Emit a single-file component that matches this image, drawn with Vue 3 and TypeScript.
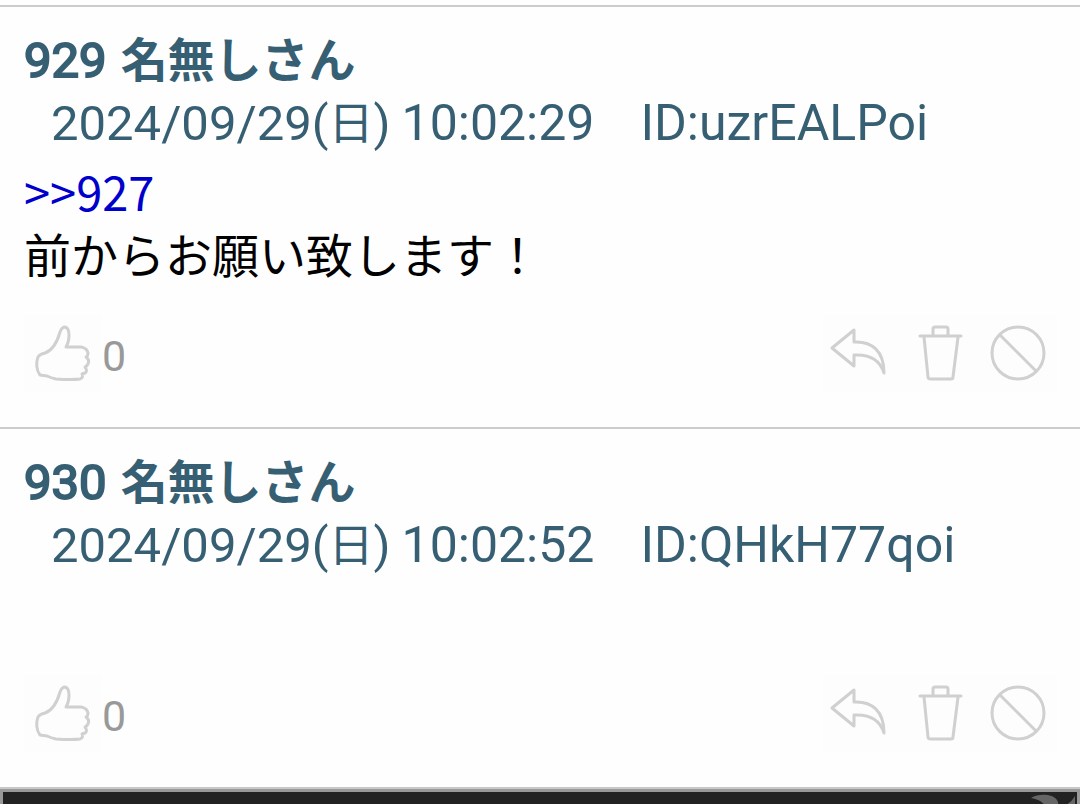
<script setup lang="ts">
interface Post {
  no: number
  name: string
  date: string
  weekday: string
  time: string
  id: string
  replyTo?: number
  text: string
  likes: number
}

const posts: Post[] = [
  { no: 929, name: '名無しさん', date: '2024/09/29', weekday: '日', time: '10:02:29', id: 'uzrEALPoi', replyTo: 927, text: '前からお願い致します！', likes: 0 },
  { no: 930, name: '名無しさん', date: '2024/09/29', weekday: '日', time: '10:02:52', id: 'QHkH77qoi', text: '', likes: 0 },
]
</script>

<template>
  <main class="thread">
    <article v-for="post in posts" :id="`post-${post.no}`" :key="post.no" class="post">
      <header class="head">
        <h2 class="title"><span class="no">{{ post.no }}</span><span>{{ post.name }}</span></h2>
        <div class="meta">
          <span class="date">{{ post.date }}(<span class="weekday">{{ post.weekday }}</span>)</span>
          <span class="time">{{ post.time }}</span>
          <span>ID:{{ post.id }}</span>
        </div>
      </header>
      <div class="body">
        <a v-if="post.replyTo" class="anchor" :href="`#post-${post.replyTo}`">&gt;&gt;{{ post.replyTo }}</a>
        <p class="text">{{ post.text }}</p>
      </div>
      <footer class="actions">
        <button class="icon" type="button" aria-label="いいね">
          <svg viewBox="0 0 78 78">
            <path d="M14 43 Q16 40 21 39 C29 36 33 29 36 18 Q38 13 41 13 Q45 14 45 21 Q45 28 42 33 H57 Q63 34 64 39 Q64 42 62 43 Q66 46 64 50 Q63 52 61 53 Q64 57 61 59 L58 60 Q60 63 56 65 Q48 66 32 65 Q27 64 23 62 L16 61 C12 56 12 48 14 43Z" />
          </svg>
        </button>
        <span class="count">{{ post.likes }}</span>
        <button class="icon first" type="button" aria-label="返信">
          <svg viewBox="0 0 78 78">
            <path d="M9 34 L31 16 V28 C49 27 61 37 61 59 C57 46 47 40 31 41 V52Z" />
          </svg>
        </button>
        <button class="icon" type="button" aria-label="削除">
          <svg viewBox="0 0 78 78">
            <path d="M19 22 H60 M32 21 V15 Q32 13 34 13 H45 Q47 13 47 15 V21 M23 23 L27 63 Q27 65 30 65 H50 Q52 65 52 63 L57 23" />
          </svg>
        </button>
        <button class="icon" type="button" aria-label="ブロック">
          <svg viewBox="0 0 78 78">
            <circle cx="39" cy="39" r="26" />
            <path d="M21 21 L57 57" />
          </svg>
        </button>
      </footer>
    </article>
    <aside class="banner" aria-label="広告">
      <svg class="leaf" viewBox="0 0 46 12">
        <path d="M0 4 C8 -1 22 0 26 6 Q28 9 27 12 H14 Q11 6 0 4Z M33 12 Q40 9 44 2 V12Z" />
      </svg>
    </aside>
  </main>
</template>

<style scoped>
.thread {
  padding-top: 5px;
  background: #fefefe;
  color: #000;
  font-family: Roboto, "Noto Sans CJK JP", sans-serif;
  font-size: 50px;
  line-height: 62px;
}
.post {
  border-top: 2px solid #ccc;
  padding: 23px 23px 35px 24px;
}
.head {
  color: #375f73;
}
.title {
  display: flex;
  align-items: baseline;
  gap: 14px;
  margin: 0;
  font-size: 47px;
  font-weight: 700;
  line-height: 62px;
}
.no {
  font-size: 49px;
  font-weight: 400;
  -webkit-text-stroke: 2px #375f73;
}
.meta {
  display: flex;
  flex-wrap: wrap;
  align-items: baseline;
  padding-left: 27px;
}
.date {
  font-size: 49px;
}
.weekday {
  font-size: 45px;
}
.time {
  margin: 0 46px 0 11px;
}
.body {
  margin-top: 4px;
  font-family: "Noto Sans CJK JP", sans-serif;
  font-size: 47px;
}
.anchor {
  display: block;
  color: #0000cc;
  text-decoration: none;
}
.text {
  margin: 0;
  min-height: 62px;
}
.actions {
  display: flex;
  align-items: center;
  margin-top: 30px;
}
.icon {
  flex: none;
  width: 78px;
  height: 78px;
  padding: 0;
  border: 0;
  background: #fdfdfd;
}
.icon svg {
  display: block;
  fill: none;
  stroke: #d0d0d0;
  stroke-width: 3;
  stroke-linecap: round;
  stroke-linejoin: round;
}
.first {
  margin-left: auto;
}
.count {
  padding-top: 6px;
  color: #999;
  font-size: 43px;
  line-height: 72px;
}
.banner {
  display: flex;
  justify-content: flex-end;
  height: 15px;
  overflow: hidden;
  box-sizing: border-box;
  border: 3px solid #999;
  border-bottom: 0;
  outline: 2px solid #c8c8c8;
  background: #222;
  margin-top: 2px;
}
.leaf {
  width: 46px;
  height: 12px;
  margin-top: 2px;
  fill: #666;
}
</style>

<style>
body {
  margin: 0;
  background: #fefefe;
  overflow: hidden;
}
</style>
